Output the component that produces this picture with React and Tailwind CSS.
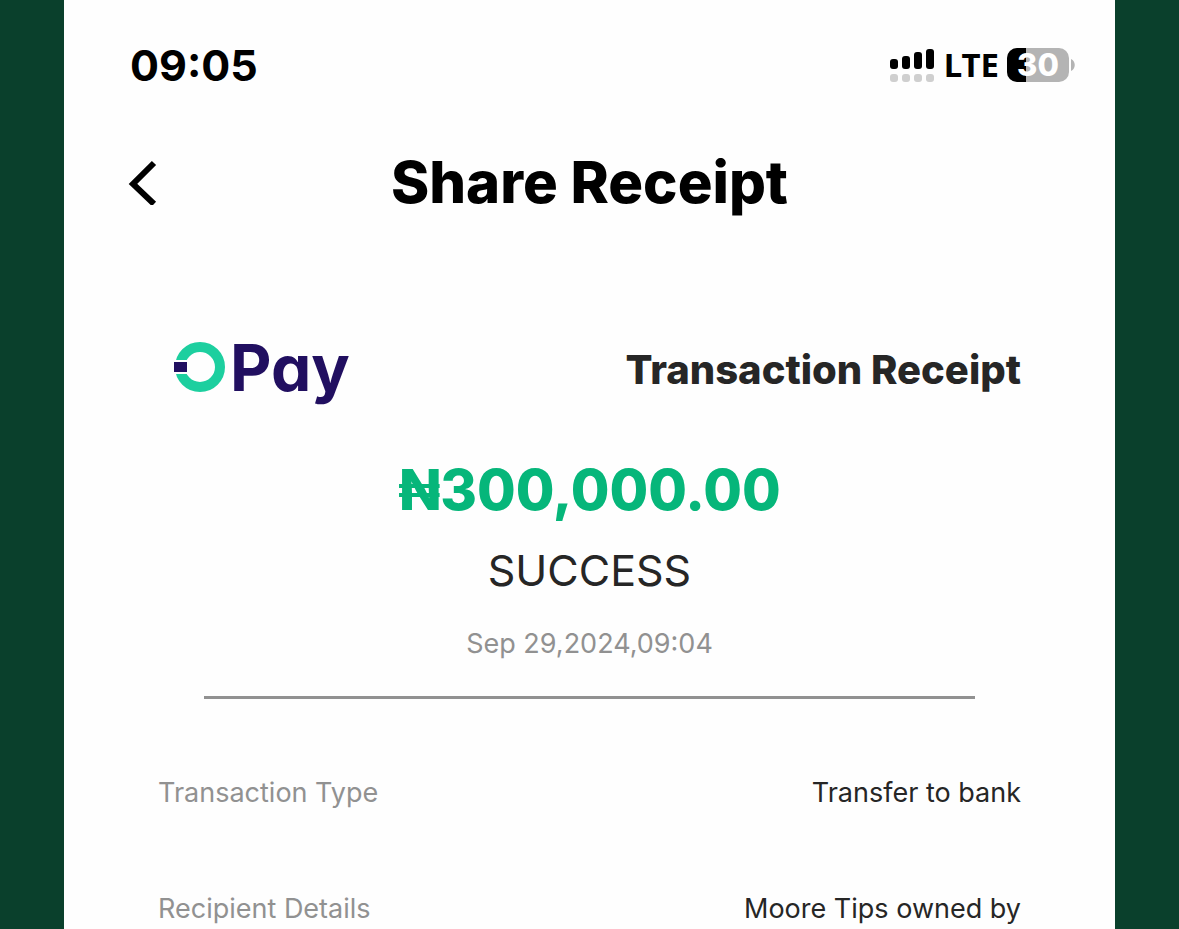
const details = [
  { label: 'Transaction Type', value: 'Transfer to bank' },
  { label: 'Recipient Details', value: 'Moore Tips owned by' },
];

function SignalIcon() {
  return (
    <svg width="46" height="34" viewBox="0 0 46 34" aria-label="Signal">
      <rect x="0" y="11" width="8" height="10" rx="3" fill="#000" />
      <rect x="12" y="8" width="8" height="13" rx="3" fill="#000" />
      <rect x="24" y="4" width="8" height="17" rx="3" fill="#000" />
      <rect x="36" y="1" width="8" height="20" rx="3" fill="#000" />
      <rect x="0" y="26" width="8" height="8" rx="3" fill="#cfcfcf" />
      <rect x="12" y="26" width="8" height="8" rx="3" fill="#cfcfcf" />
      <rect x="24" y="26" width="8" height="8" rx="3" fill="#cfcfcf" />
      <rect x="36" y="26" width="8" height="8" rx="3" fill="#cfcfcf" />
    </svg>
  );
}

function Battery({ level }) {
  return (
    <div className="flex items-center gap-0.5">
      <div className="relative flex h-[34px] w-[62px] items-center justify-center rounded-[10px] bg-[#b4b4b4]">
        <div className="absolute inset-y-0 left-0 rounded-l-[10px] bg-black" style={{ width: `${level}%` }} />
        <span className="relative text-[31px] leading-[34px] font-extrabold text-white">{level}</span>
      </div>
      <svg width="4" height="12" viewBox="0 0 4 12">
        <path d="M0 0 C5 2 5 10 0 12 Z" fill="#b4b4b4" />
      </svg>
    </div>
  );
}

function Logo() {
  return (
    <div className="flex items-center gap-1">
      <svg width="52" height="52" viewBox="0 0 52 52">
        <circle cx="26" cy="25" r="20" fill="none" stroke="#1dcf9f" strokeWidth="10" />
        <rect x="0" y="18" width="15" height="14" fill="#fefefe" />
        <rect x="0" y="20" width="13" height="10" fill="#210f60" />
      </svg>
      <span className="text-[64px] leading-[64px] font-bold text-[#210f60] [font-feature-settings:'cv11']">Pay</span>
    </div>
  );
}

export default function App() {
  return (
    <div className="min-h-screen bg-[#0a402c] px-16 font-['Inter',sans-serif]">
      <main className="min-h-screen bg-[#fefefe]">
        {/* Status bar */}
        <div className="flex items-center justify-between pt-10 pr-10 pl-[66px] text-black">
          <span className="text-[43px] leading-[50px] font-bold">09:05</span>
          <div className="flex items-center gap-2">
            <SignalIcon />
            <span className="font-['Noto_Sans',sans-serif] text-[33px] leading-[50px] font-bold">LTE</span>
            <Battery level={30} />
          </div>
        </div>

        {/* Header */}
        <header className="mt-14 grid grid-cols-[1fr_auto_1fr] items-center px-16 text-black">
          <button type="button" aria-label="Back" className="justify-self-start">
            <svg width="30" height="46" viewBox="0 0 30 46" fill="none" stroke="currentColor" strokeWidth="6">
              <path d="M26 4 L5 25 L26 45" />
            </svg>
          </button>
          <h1 className="text-[58px] leading-[72px] font-extrabold">Share Receipt</h1>
        </header>

        {/* Receipt */}
        <section className="px-[94px] pt-[118px]">
          <div className="flex items-center justify-between pl-4">
            <Logo />
            <h2 className="pt-1 text-[40px] leading-[60px] font-extrabold text-[#262626]">Transaction Receipt</h2>
          </div>

          <div className="mt-[54px] flex flex-col items-center">
            <p className="text-[56px] leading-[72px] font-extrabold text-[#06b67a]">₦300,000.00</p>
            <p className="mt-[14px] text-[43px] leading-[60px] text-[#262626]">SUCCESS</p>
            <p className="mt-[26px] text-[27px] leading-[36px] text-[#919191]">Sep 29,2024,09:04</p>
          </div>

          <hr className="mx-[46px] mt-[34px] border-t-[3px] border-[#919191]" />

          <dl className="mt-[76px] flex flex-col gap-20">
            {details.map((row) => (
              <div key={row.label} className="flex justify-between text-[27px] leading-[36px]">
                <dt className="text-[#919191]">{row.label}</dt>
                <dd className="text-[#262626]">{row.value}</dd>
              </div>
            ))}
          </dl>
        </section>
      </main>
    </div>
  );
}
